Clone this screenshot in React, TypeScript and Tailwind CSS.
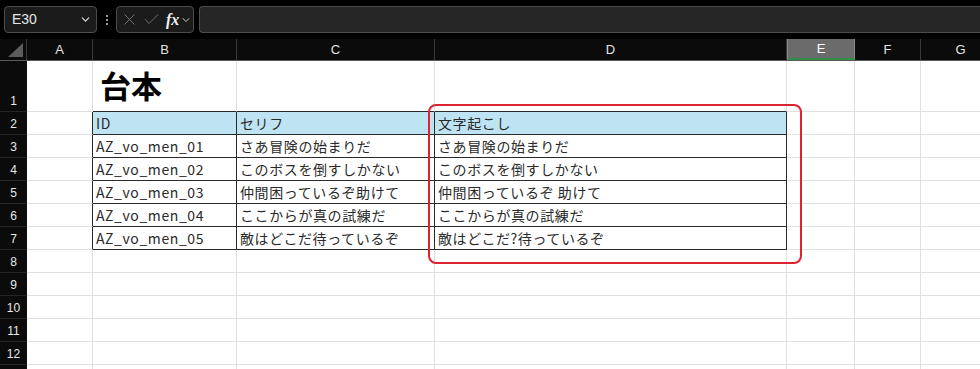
import { ChevronDown, X, Check } from "lucide-react"

const cols = [
  { key: "A", w: "w-[66px]" },
  { key: "B", w: "w-[144px]" },
  { key: "C", w: "w-[198px]" },
  { key: "D", w: "w-[352px]" },
  { key: "E", w: "w-[68px]" },
  { key: "F", w: "w-[66px]" },
  { key: "G", w: "w-[80px]" },
]

// B2:D7
const table: Record<number, string[]> = {
  2: ["ID", "セリフ", "文字起こし"],
  3: ["AZ_vo_men_01", "さあ冒険の始まりだ", "さあ冒険の始まりだ"],
  4: ["AZ_vo_men_02", "このボスを倒すしかない", "このボスを倒すしかない"],
  5: ["AZ_vo_men_03", "仲間困っているぞ助けて", "仲間困っているぞ 助けて"],
  6: ["AZ_vo_men_04", "ここからが真の試練だ", "ここからが真の試練だ"],
  7: ["AZ_vo_men_05", "敵はどこだ待っているぞ", "敵はどこだ?待っているぞ"],
}

const inTable = (r: number, c: number) => r >= 2 && r <= 7 && c >= 1 && c <= 3

const rows = [1, 2, 3, 4, 5, 6, 7, 8, 9, 10, 11, 12, 13]

function Cell({ r, c }: { r: number; c: number }) {
  const right = inTable(r, c) || inTable(r, c + 1)
  const bottom = inTable(r, c) || inTable(r + 1, c)
  const header = r === 2 && inTable(r, c)
  const text = inTable(r, c) ? table[r][c - 1] : ""
  return (
    <div
      className={`${cols[c].w} shrink-0 h-full flex items-end pl-[3px] pb-[1px] text-[14px] leading-[20px] tracking-[0.6px] text-[#2a2a2a] whitespace-nowrap overflow-hidden border-r border-b ${
        right ? "border-r-[#2a2a2a]" : "border-r-[#e1e1e1]"
      } ${bottom ? "border-b-[#2a2a2a]" : "border-b-[#e1e1e1]"} ${header ? "bg-[#bee4f4]" : "bg-white"}`}
    >
      {r === 1 && c === 1 ? (
        <span className="text-[31px] font-bold leading-[40px] tracking-normal text-black pl-[4px] pb-[5px]">台本</span>
      ) : (
        text
      )}
    </div>
  )
}

export default function App() {
  return (
    <div className="w-[980px] h-[369px] bg-black overflow-hidden relative font-['Noto_Sans_CJK_JP','Noto_Sans',sans-serif]">
      {/* Formula bar */}
      <div className="h-[39px] flex items-start pt-[6px] pl-[4px]">
        <div className="w-[93px] h-[27px] rounded-[4px] border border-[#4c4c4c] bg-[#1b1b1b] flex items-center justify-between pl-[7px] pr-[4px]">
          <span className="text-[14px] text-[#e6e6e6] font-['Liberation_Sans',sans-serif]">E30</span>
          <ChevronDown className="w-[13px] h-[13px] text-[#d0d0d0]" strokeWidth={2.5} />
        </div>
        <div className="w-[19px] h-[27px] flex flex-col items-center justify-center gap-[2px]">
          <span className="w-[2px] h-[2px] bg-[#cfcfcf] rounded-full" />
          <span className="w-[2px] h-[2px] bg-[#cfcfcf] rounded-full" />
          <span className="w-[2px] h-[2px] bg-[#cfcfcf] rounded-full" />
        </div>
        <div className="w-[78px] h-[27px] rounded-[4px] border border-[#4c4c4c] bg-[#1b1b1b] flex items-center pl-[3px] gap-[3px]">
          <X className="w-[19px] h-[19px] text-[#7c7c7c]" strokeWidth={1.1} />
          <Check className="w-[19px] h-[19px] text-[#7c7c7c]" strokeWidth={1.1} />
          <span className="flex items-center ml-[2px]">
            <span className="text-[16px] italic font-bold text-[#f0f0f0] font-['Liberation_Serif',serif] leading-none">fx</span>
            <ChevronDown className="w-[12px] h-[12px] text-[#cfcfcf] ml-[1px]" strokeWidth={2} />
          </span>
        </div>
        <div className="ml-[5px] flex-1 h-[27px] rounded-l-[4px] border border-r-0 border-[#4c4c4c] bg-[#262626]" />
      </div>

      {/* Column headers */}
      <div className="h-[22px] flex bg-[#0b0b0b] border-b border-[#5a5a5a]">
        <div className="w-[27px] shrink-0 h-full relative border-r border-[#3a3a3a]">
          <div className="absolute right-[3px] bottom-[3px] w-0 h-0 border-l-[15px] border-l-transparent border-b-[14px] border-b-[#5c5c5c]" />
        </div>
        {cols.map((col) =>
          col.key === "E" ? (
            <div
              key={col.key}
              className={`${col.w} shrink-0 h-full flex items-center justify-center text-[13px] text-white bg-[#6b6b6b] border-x border-[#8a8a8a] border-b-2 border-b-[#2f8f4a] font-['Liberation_Sans',sans-serif]`}
            >
              {col.key}
            </div>
          ) : (
            <div
              key={col.key}
              className={`${col.w} shrink-0 h-full flex items-center justify-center text-[13px] text-[#e4e4e4] border-r border-[#3a3a3a] font-['Liberation_Sans',sans-serif]`}
            >
              {col.key}
            </div>
          )
        )}
      </div>

      {/* Rows */}
      {rows.map((r) => (
        <div key={r} className={`flex ${r === 1 ? "h-[51px]" : "h-[23px]"}`}>
          <div className="w-[27px] shrink-0 h-full bg-[#0b0b0b] border-b border-[#262626] flex items-end justify-center pb-[2px] text-[12px] leading-[16px] text-[#e8e8e8] font-['Liberation_Sans',sans-serif]">
            {r < 13 ? r : ""}
          </div>
          {cols.map((col, c) => (
            <Cell key={col.key} r={r} c={c} />
          ))}
        </div>
      ))}

      {/* Highlight box */}
      <div className="absolute left-[428px] top-[104px] w-[374px] h-[160px] border-2 border-[#dc2430] rounded-[8px]" />
    </div>
  )
}
